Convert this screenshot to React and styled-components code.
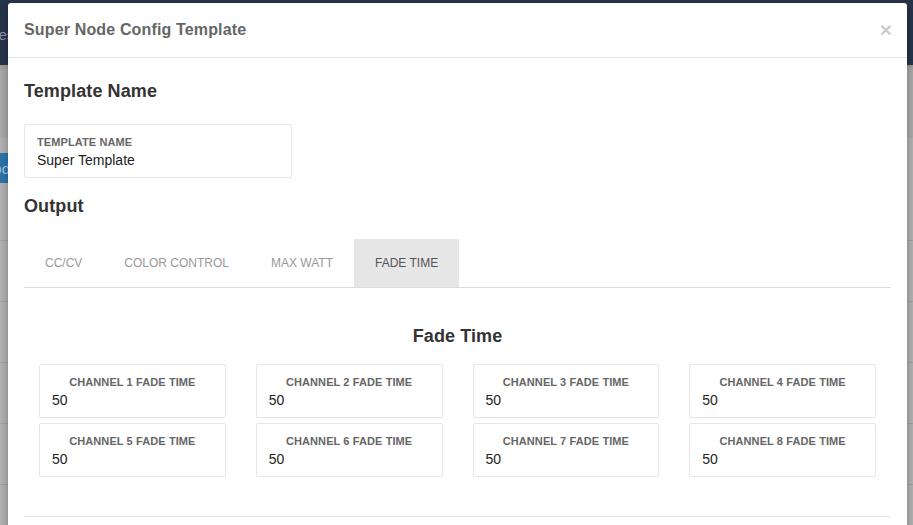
import React from 'react';
import styled, { createGlobalStyle } from 'styled-components';

const GlobalStyle = createGlobalStyle`
  html, body {
    margin: 0;
    padding: 0;
    height: 525px;
    overflow: hidden;
    font-family: "Liberation Sans", Arial, Helvetica, sans-serif;
  }
  * { box-sizing: border-box; }
`;

// page behind the (dimmed) modal backdrop
const Page = styled.div`
  position: relative;
  width: 913px;
  height: 525px;
  overflow: hidden;
  background: #b1b1b1;
`;
const Navbar = styled.div`
  height: 65px;
  background: #26344a;
  display: flex;
  align-items: center;
  padding-top: 4px;
  color: #8d98a8;
  font-size: 15px;
`;
const Brand = styled.span`
  margin-left: -14px;
`;
const Subbar = styled.div`
  height: 73px;
  background: linear-gradient(#999 0, #a9a9a9 6px, #a9a9a9 100%);
`;
const PageContent = styled.div`
  padding-top: 15px;
`;
const PageButton = styled.div`
  width: 60px;
  height: 30px;
  margin-left: -40px;
  background: #2c74ab;
  color: #a9c5dc;
  font-size: 15px;
  display: flex;
  align-items: center;
  justify-content: flex-end;
  padding-right: 10px;
`;
const PageTable = styled.div`
  margin-top: 57px;
`;
const PageRow = styled.div`
  height: 61px;
  border-top: 1px solid #a2a2a2;
`;

// modal
const Modal = styled.div`
  position: absolute;
  top: 3px;
  left: 8px;
  width: 899px;
  height: 560px;
  background: #fff;
  border-radius: 3px 3px 0 0;
  box-shadow: 0 3px 9px rgba(0, 0, 0, 0.3);
`;
const ModalHeader = styled.div`
  display: flex;
  align-items: center;
  justify-content: space-between;
  padding: 16px 16px;
  height: 55px;
  border-bottom: 1px solid #e5e5e5;
`;
const ModalTitle = styled.h4`
  margin: 0;
  font-size: 16px;
  line-height: 22px;
  font-weight: 700;
  color: #666;
  letter-spacing: 0.15px;
`;
const Close = styled.span`
  font-size: 21px;
  font-weight: 700;
  line-height: 1;
  color: #000;
  opacity: 0.2;
  margin-right: -1px;
  margin-top: -2px;
`;
const ModalBody = styled.div`
  padding: 22px 16px 0;
`;
const SectionTitle = styled.h3`
  margin: ${p => p.$top || 0}px 0 0;
  font-size: 18px;
  line-height: 22px;
  font-weight: 700;
  color: #333;
  letter-spacing: 0.1px;
  text-align: ${p => (p.$center ? 'center' : 'left')};
`;
const Field = styled.div`
  width: ${p => p.$width || 'auto'};
  margin-top: ${p => p.$top || 0}px;
  border: 1px solid #e6e6e6;
  border-radius: 2px;
  padding: 10px 12px 8px;
`;
const FieldLabel = styled.div`
  font-size: 11px;
  line-height: 14px;
  font-weight: 700;
  color: #666;
  letter-spacing: 0.1px;
  text-transform: uppercase;
  margin-bottom: 2px;
  text-align: ${p => (p.$center ? 'center' : 'left')};
`;
const FieldValue = styled.div`
  font-size: 14px;
  line-height: 18px;
  color: #222;
`;
const Tabs = styled.div`
  display: flex;
  margin-top: 22px;
  border-bottom: 1px solid #ddd;
`;
const Tab = styled.div`
  height: 48px;
  padding: 0 21px;
  display: flex;
  align-items: center;
  font-size: 12px;
  text-transform: uppercase;
  color: ${p => (p.$active ? '#555' : '#999')};
  background: ${p => (p.$active ? '#e6e6e6' : 'transparent')};
`;
const ChannelGrid = styled.div`
  display: grid;
  grid-template-columns: repeat(4, 1fr);
  row-gap: 5px;
  margin-top: 17px;
`;
const Col = styled.div`
  padding: 0 15px;
`;
const Divider = styled.hr`
  margin: 39px 0 0;
  border: 0;
  border-top: 1px solid #e5e5e5;
`;

const tabs = ['CC/CV', 'Color Control', 'Max Watt', 'Fade Time'];
const channels = [1, 2, 3, 4, 5, 6, 7, 8].map(n => ({ n, value: 50 }));

export default function App() {
  return (
    <>
      <GlobalStyle />
      <Page>
        <Navbar>
          <Brand>Mes</Brand>
        </Navbar>
        <Subbar />
        <PageContent>
          <PageButton>od</PageButton>
          <PageTable>
            {[0, 1, 2, 3, 4].map(i => (
              <PageRow key={i} />
            ))}
          </PageTable>
        </PageContent>

        <Modal>
          <ModalHeader>
            <ModalTitle>Super Node Config Template</ModalTitle>
            <Close>×</Close>
          </ModalHeader>
          <ModalBody>
            <SectionTitle>Template Name</SectionTitle>
            <Field $width="268px" $top={22}>
              <FieldLabel>Template Name</FieldLabel>
              <FieldValue>Super Template</FieldValue>
            </Field>

            <SectionTitle $top={17}>Output</SectionTitle>
            <Tabs>
              {tabs.map(t => (
                <Tab key={t} $active={t === 'Fade Time'}>
                  {t}
                </Tab>
              ))}
            </Tabs>

            <SectionTitle $top={37} $center>
              Fade Time
            </SectionTitle>
            <ChannelGrid>
              {channels.map(c => (
                <Col key={c.n}>
                  <Field>
                    <FieldLabel $center>Channel {c.n} Fade Time</FieldLabel>
                    <FieldValue>{c.value}</FieldValue>
                  </Field>
                </Col>
              ))}
            </ChannelGrid>
            <Divider />
          </ModalBody>
        </Modal>
      </Page>
    </>
  );
}
